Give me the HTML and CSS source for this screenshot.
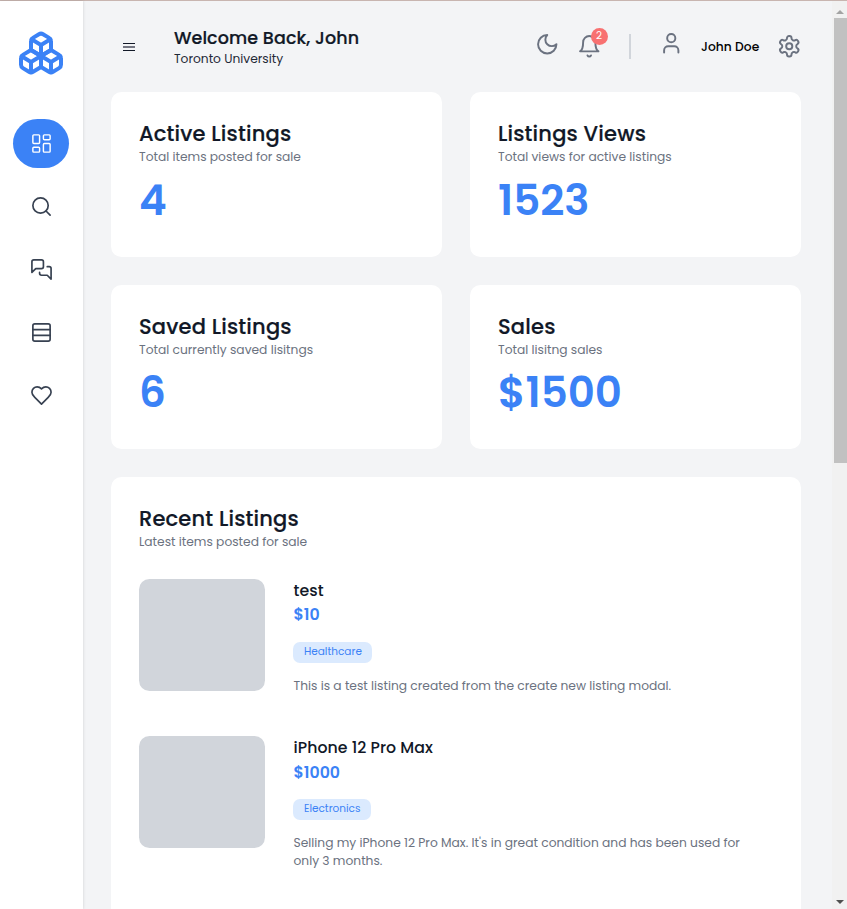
FILE: index.html
```html
<!DOCTYPE html>
<html lang="en">
<head>
<meta charset="utf-8">
<title>Dashboard</title>
<link rel="stylesheet" href="styles.css">
</head>
<body>
<div class="app">
  <nav class="sidebar">
    <svg class="icon logo" viewBox="0 0 24 24"><path d="M2.97 12.92A2 2 0 0 0 2 14.63v3.24a2 2 0 0 0 .97 1.71l3 1.8a2 2 0 0 0 2.06 0L12 19v-5.5l-5-3-4.03 2.42Z"/><path d="m7 16.5-4.74-2.85M7 16.5l5-3M7 16.5v5.17"/><path d="M12 13.5V19l3.97 2.38a2 2 0 0 0 2.06 0l3-1.8a2 2 0 0 0 .97-1.71v-3.24a2 2 0 0 0-.97-1.71L17 10.5l-5 3Z"/><path d="m17 16.5-5-3M17 16.5l4.74-2.85M17 16.5v5.17"/><path d="M7.97 4.42A2 2 0 0 0 7 6.13v4.37l5 3 5-3V6.13a2 2 0 0 0-.97-1.71l-3-1.8a2 2 0 0 0-2.06 0l-3 1.8Z"/><path d="M12 8 7.26 5.15M12 8l4.74-2.85M12 13.5V8"/></svg>
    <a class="nav-item active"><svg class="icon" viewBox="0 0 24 24"><rect x="3" y="3" width="7" height="9" rx="1"/><rect x="14" y="3" width="7" height="5" rx="1"/><rect x="14" y="12" width="7" height="9" rx="1"/><rect x="3" y="16" width="7" height="5" rx="1"/></svg></a>
    <a class="nav-item"><svg class="icon" viewBox="0 0 24 24"><circle cx="11" cy="11" r="8"/><path d="m21 21-4.3-4.3"/></svg></a>
    <a class="nav-item"><svg class="icon" viewBox="0 0 24 24"><path d="M14 9a2 2 0 0 1-2 2H6l-4 4V4c0-1.100.9-2 2-2h8a2 2 0 0 1 2 2v5Z"/><path d="M18 9h2a2 2 0 0 1 2 2v11l-4-4h-6a2 2 0 0 1-2-2v-1"/></svg></a>
    <a class="nav-item"><svg class="icon" viewBox="0 0 24 24"><rect x="3" y="3" width="18" height="18" rx="2"/><path d="M3 9h18M3 15h18"/></svg></a>
    <a class="nav-item"><svg class="icon" viewBox="0 0 24 24"><path d="M19 14c1.490-1.460 3-3.210 3-5.500A5.500 5.500 0 0 0 16.500 3c-1.760 0-3 .5-4.500 2-1.500-1.500-2.740-2-4.500-2A5.500 5.500 0 0 0 2 8.500c0 2.300 1.500 4.050 3 5.500l7 7Z"/></svg></a>
  </nav>
  <main class="content">
    <header class="topbar">
      <div class="burger"><i></i><i></i><i></i></div>
      <div class="welcome">
        <h1>Welcome Back, John</h1>
        <p>Toronto University</p>
      </div>
      <svg class="icon moon" viewBox="0 0 24 24"><path d="M12 3a6 6 0 0 0 9 9 9 9 0 1 1-9-9Z"/></svg>
      <div class="bell">
        <svg class="icon" viewBox="0 0 24 24"><path d="M6 8a6 6 0 0 1 12 0c0 7 3 9 3 9H3s3-2 3-9"/><path d="M10.300 21a1.940 1.940 0 0 0 3.400 0"/></svg>
        <span class="badge">2</span>
      </div>
      <span class="divider"></span>
      <svg class="icon user" viewBox="0 0 24 24"><path d="M19 21v-2a4 4 0 0 0-4-4H9a4 4 0 0 0-4 4v2"/><circle cx="12" cy="7" r="4"/></svg>
      <span class="name">John Doe</span>
      <svg class="icon gear" viewBox="0 0 24 24"><path d="M12.220 2h-.44a2 2 0 0 0-2 2v.18a2 2 0 0 1-1 1.730l-.43.25a2 2 0 0 1-2 0l-.15-.08a2 2 0 0 0-2.730.73l-.22.38a2 2 0 0 0 .73 2.730l.15.1a2 2 0 0 1 1 1.720v.51a2 2 0 0 1-1 1.740l-.15.09a2 2 0 0 0-.73 2.730l.22.38a2 2 0 0 0 2.730.73l.15-.08a2 2 0 0 1 2 0l.43.25a2 2 0 0 1 1 1.730V20a2 2 0 0 0 2 2h.44a2 2 0 0 0 2-2v-.18a2 2 0 0 1 1-1.730l.43-.25a2 2 0 0 1 2 0l.15.08a2 2 0 0 0 2.730-.73l.22-.39a2 2 0 0 0-.73-2.730l-.15-.08a2 2 0 0 1-1-1.740v-.5a2 2 0 0 1 1-1.740l.15-.09a2 2 0 0 0 .73-2.730l-.22-.38a2 2 0 0 0-2.730-.73l-.15.08a2 2 0 0 1-2 0l-.43-.25a2 2 0 0 1-1-1.730V4a2 2 0 0 0-2-2z"/><circle cx="12" cy="12" r="3"/></svg>
    </header>
    <section class="stats">
      <article class="card"><h2>Active Listings</h2><p class="sub">Total items posted for sale</p><strong>4</strong></article>
      <article class="card"><h2>Listings Views</h2><p class="sub">Total views for active listings</p><strong>1523</strong></article>
      <article class="card"><h2>Saved Listings</h2><p class="sub">Total currently saved lisitngs</p><strong>6</strong></article>
      <article class="card"><h2>Sales</h2><p class="sub">Total lisitng sales</p><strong>$1500</strong></article>
    </section>
    <section class="card recent">
      <h2>Recent Listings</h2>
      <p class="sub">Latest items posted for sale</p>
      <article class="listing">
        <div class="thumb"></div>
        <div class="details">
          <h3>test</h3><b class="price">$10</b>
          <span class="tag">Healthcare</span>
          <p class="desc">This is a test listing created from the create new listing modal.</p>
        </div>
      </article>
      <article class="listing">
        <div class="thumb"></div>
        <div class="details">
          <h3>iPhone 12 Pro Max</h3><b class="price">$1000</b>
          <span class="tag">Electronics</span>
          <p class="desc">Selling my iPhone 12 Pro Max. It's in great condition and has been used for<br>only 3 months.</p>
        </div>
      </article>
    </section>
  </main>
  <div class="scrollbar">
    <i class="up"></i><div class="thumb-bar"></div><i class="down"></i>
  </div>
</div>
</body>
</html>
```
FILE: styles.css
```css
* { box-sizing: border-box; margin: 0; padding: 0; }
html { font-size: 14px; }
body {
  height: 909px;
  overflow: hidden;
  background: #f3f4f6;
  color: #111827;
  font-family: Poppins, Inter, sans-serif;
}
.app { display: flex; height: 909px; border-top: 1px solid #c8b5b0; }
.icon {
  display: block;
  flex: none;
  width: 24.5px;
  height: 24.5px;
  fill: none;
  stroke: #6b7280;
  stroke-width: 1.9;
  stroke-linecap: round;
  stroke-linejoin: round;
}

.sidebar {
  flex: none;
  width: 83px;
  padding: 28px 1px 0 0;
  background: #fff;
  box-shadow: 0 0 3px rgba(0, 0, 0, .15);
  display: flex;
  flex-direction: column;
  align-items: center;
}
.logo { width: 48px; height: 48px; stroke: #3b82f6; stroke-width: 2; margin: 0 0 42px 0; }
.nav-item {
  width: 56px;
  height: 49px;
  margin-bottom: 14px;
  border-radius: 25px;
  display: flex;
  align-items: center;
  justify-content: center;
}
.nav-item .icon { width: 23px; height: 23px; margin: 0 0 0 1px; stroke: #374151; stroke-width: 1.75; }
.nav-item.active { background: #3b82f6; }
.nav-item.active .icon { stroke: #fff; stroke-width: 1.5; }

.content { flex: none; width: 749px; padding: 0 31px 0 28px; height: 908px; overflow: hidden; }
.topbar { height: 91px; display: flex; align-items: center; }
.burger { margin-left: 12px; width: 12px; height: 8px; display: flex; flex-direction: column; justify-content: space-between; }
.burger i { display: block; height: 1px; background: #111827; }
.burger i:nth-child(2) { height: 2px; background: #747682; }
.welcome { margin-left: 39px; width: 363px; }
h1 { font-size: 17.5px; line-height: 24.5px; font-weight: 500; letter-spacing: .1px; -webkit-text-stroke: .2px #111827; }
.welcome p { font-size: 12.25px; line-height: 17.5px; color: #1f2937; }
.moon { margin-bottom: 5px; }
.bell { position: relative; margin-left: 17.5px; }
.badge {
  position: absolute;
  left: 14px;
  top: -6px;
  width: 17px;
  height: 17px;
  border-radius: 50%;
  background: #f87171;
  color: #fff;
  font-size: 10.5px;
  line-height: 16px;
  text-align: center;
}
.divider { width: 2px; height: 25px; margin-left: 28px; background: #d1d5db; }
.user { margin-left: 28px; margin-bottom: 7px; }
.name { margin-left: 17.5px; width: 58px; font-size: 12.25px; font-weight: 500; letter-spacing: .05px; white-space: nowrap; color: #000; }
.gear { margin-left: 17.5px; }

.stats { display: grid; grid-template-columns: 331px 331px; gap: 28px; }
.card { height: 164.5px; padding: 28px; border-radius: 10.5px; background: #fff; }
h2 { font-size: 21px; line-height: 28px; font-weight: 500; letter-spacing: .18px; -webkit-text-stroke: .2px #111827; }
.sub { font-size: 12.25px; line-height: 17.5px; font-weight: 400; color: #6b7280; }
.card strong { display: block; margin-top: 7px; font-size: 42px; line-height: 56px; font-weight: 600; color: #3b82f6; }

.recent { height: 500px; margin-top: 28px; }
.listing { display: flex; gap: 28.5px; margin-top: 28px; }
.listing + .listing { margin-top: 42px; }
.thumb { flex: none; width: 126px; height: 112px; border-radius: 10.5px; background: #d1d5db; }
.details { flex: 1; display: flex; flex-direction: column; align-items: flex-start; }
h3 { font-size: 15.75px; line-height: 24.5px; font-weight: 500; letter-spacing: .05px; }
.price { font-size: 15.75px; line-height: 24.5px; font-weight: 600; color: #3b82f6; }
.tag { margin: 14px 0 14px -.5px; padding: 0 10.5px 0 11px; height: 21px; border-radius: 7px; background: #dbeafe; color: #3b82f6; font-size: 10.5px; line-height: 20px; }
.desc { font-size: 12.25px; line-height: 17.5px; font-weight: 400; color: #6b7280; white-space: nowrap; }

.scrollbar { flex: none; width: 15px; display: flex; flex-direction: column; align-items: flex-end; background: #f1f1f1; }
.thumb-bar { width: 13px; height: 445px; background: #c1c1c1; }
.up, .down { width: 7px; margin: 9px 3px 4px; border: 4px solid transparent; border-top: 0; border-bottom-color: #a3a3a3; }
.down { margin: auto 3px 5px; border-bottom: 0; border-top: 4px solid #505050; }
```
